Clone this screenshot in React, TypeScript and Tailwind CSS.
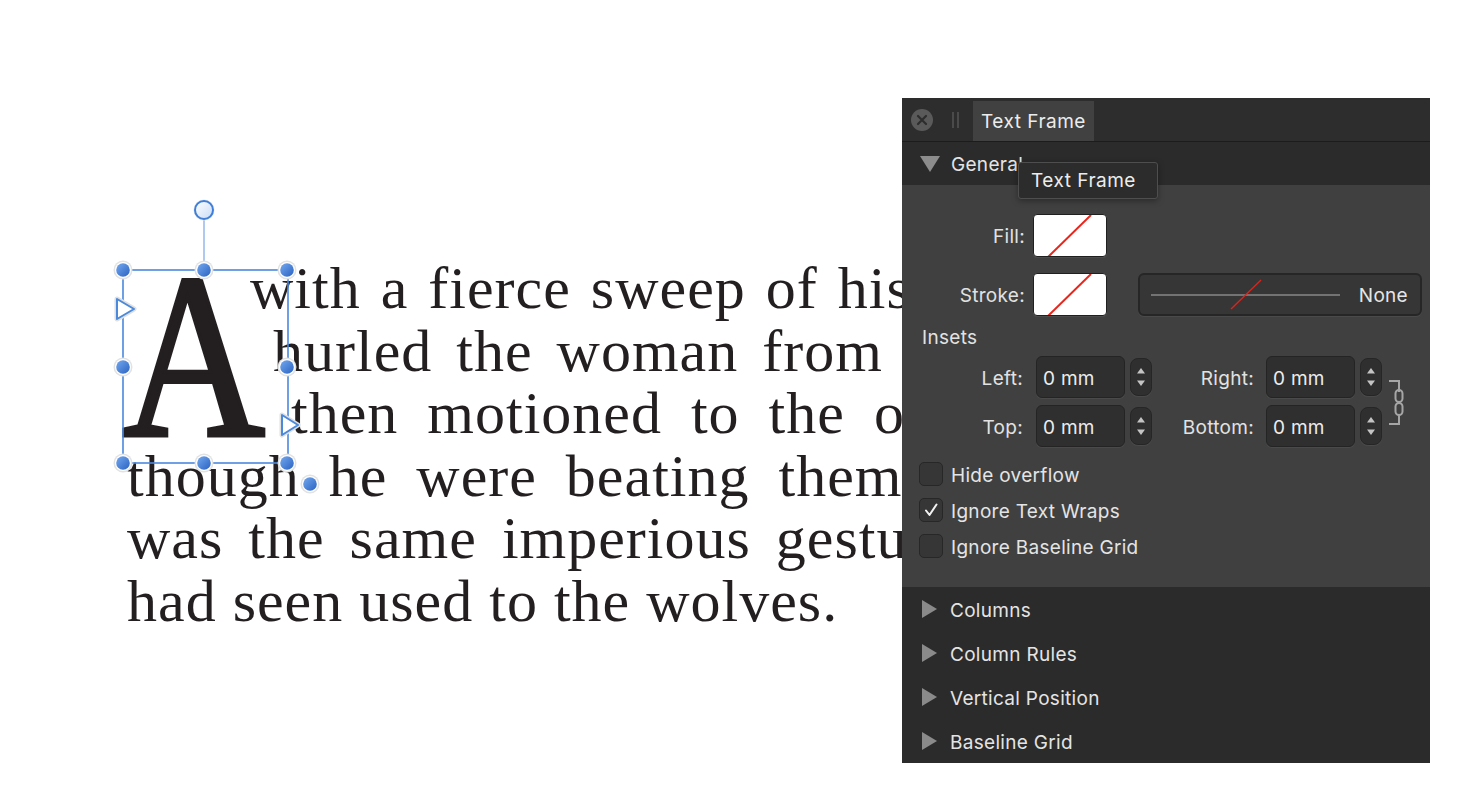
import * as React from "react";

const label = "pt-[4px] text-[19px] tracking-[0.3px] text-[#e2e2e2]";

function Stepper() {
  return (
    <div className="ml-[5px] flex h-[38px] w-[22px] flex-col items-center justify-center gap-[6px] rounded-[8px] border border-[#262626] bg-[#2f2f2f] shadow-[0_1px_0_#4a4a4a]">
      <svg width="10" height="7" viewBox="0 0 10 7" aria-hidden="true">
        <path d="M1 6.5 L5 1 L9 6.5 Z" fill="#c4c4c4" />
      </svg>
      <svg width="10" height="7" viewBox="0 0 10 7" aria-hidden="true">
        <path d="M1 0.5 L5 6 L9 0.5 Z" fill="#c4c4c4" />
      </svg>
    </div>
  );
}

function NumField({ value }: { value: string }) {
  return (
    <div className="flex h-[42px] w-[89px] items-center rounded-[6px] border border-[#242424] bg-[#2f2f2f] pl-[6px] pt-[4px] text-[19px] tracking-[0.3px] text-[#ececec] shadow-[0_1px_0_#4a4a4a]">
      {value}
    </div>
  );
}

function Swatch() {
  return (
    <div className="h-[43px] w-[74px] overflow-hidden rounded-[4px] border border-[#1f1f1f] bg-white shadow-[0_1px_0_#4c4c4c]">
      <svg width="74" height="43" viewBox="0 0 74 43" aria-hidden="true">
        <line x1="14" y1="42" x2="57" y2="0" stroke="#e8261c" strokeWidth="2" />
      </svg>
    </div>
  );
}

function Check({ text, checked }: { text: string; checked?: boolean }) {
  return (
    <div className="flex h-[24px] items-center pl-[17px]">
      <div className="flex h-[24px] w-[24px] items-center justify-center rounded-[5px] border border-[#272727] bg-[#363636]">
        {checked && (
          <svg width="16" height="16" viewBox="0 0 16 16" aria-hidden="true">
            <path d="M3 8.5 L6.5 13 L13.5 2.5" fill="none" stroke="#f2f2f2" strokeWidth="2" strokeLinecap="round" strokeLinejoin="round" />
          </svg>
        )}
      </div>
      <span className="ml-[8px] pt-[4px] text-[19px] tracking-[0.3px] text-[#e4e4e4]">{text}</span>
    </div>
  );
}

function Section({ title }: { title: string }) {
  return (
    <div className="flex h-[44px] items-center bg-[#2b2b2b]">
      <svg className="ml-[20px]" width="16" height="18" viewBox="0 0 16 18" aria-hidden="true">
        <path d="M0 0 L15 9 L0 18 Z" fill="#8a8a8a" />
      </svg>
      <span className="ml-[12px] pt-[4px] text-[19px] tracking-[0.3px] text-[#e4e4e4]">{title}</span>
    </div>
  );
}

function Handle({ x, y }: { x: number; y: number }) {
  return (
    <g>
      <circle cx={x} cy={y} r="9.5" fill="#e2e2e2" />
      <circle cx={x} cy={y} r="8" fill="#ffffff" />
      <circle cx={x} cy={y} r="6.8" fill="url(#hb)" />
    </g>
  );
}

function SelectionFrame() {
  return (
    <svg
      className="absolute left-0 top-0"
      width="1460"
      height="790"
      viewBox="0 0 1460 790"
      aria-hidden="true"
    >
      <defs>
        <linearGradient id="hb" x1="0" y1="0" x2="1" y2="1">
          <stop offset="0" stopColor="#74a9ee" />
          <stop offset="1" stopColor="#2a62c2" />
        </linearGradient>
        <linearGradient id="rb" x1="0" y1="0" x2="1" y2="1">
          <stop offset="0" stopColor="#ffffff" />
          <stop offset="1" stopColor="#c9dcf6" />
        </linearGradient>
      </defs>
      <line x1="204" y1="219" x2="204" y2="266" stroke="#94b7eb" strokeWidth="1.5" />
      <rect x="123" y="270" width="165" height="193" fill="none" stroke="#4a89dc" strokeWidth="1.6" />
      <circle cx="204" cy="210" r="10.5" fill="#e6e6e6" />
      <circle cx="204" cy="210" r="9" fill="url(#rb)" stroke="#3f7fd9" strokeWidth="2" />
      <path d="M117 299 L134 309 L117 319 Z" fill="#ffffff" stroke="#e0e0e0" strokeWidth="5" strokeLinejoin="round" />
      <path d="M117 299 L134 309 L117 319 Z" fill="#ffffff" stroke="#4a89dc" strokeWidth="2" strokeLinejoin="round" />
      <path d="M282 415 L298 425 L282 435 Z" fill="#ffffff" stroke="#e0e0e0" strokeWidth="5" strokeLinejoin="round" />
      <path d="M282 415 L298 425 L282 435 Z" fill="#ffffff" stroke="#4a89dc" strokeWidth="2" strokeLinejoin="round" />
      <Handle x={123} y={270} />
      <Handle x={204} y={270} />
      <Handle x={287} y={270} />
      <Handle x={123} y={367} />
      <Handle x={287} y={367} />
      <Handle x={123} y={463} />
      <Handle x={204} y={463} />
      <Handle x={287} y={463} />
      <Handle x={310} y={484} />
    </svg>
  );
}

const lines = [
  { text: "with a fierce sweep of his arm he", cls: "ml-[123px] [word-spacing:4px]" },
  { text: "hurled the woman from him, and", cls: "ml-[146px] [word-spacing:8px]" },
  { text: "then motioned to the others, as", cls: "ml-[164px] [word-spacing:13px]" },
  { text: "though he were beating them off. It", cls: "[word-spacing:13px]" },
  { text: "was the same imperious gesture that I", cls: "[word-spacing:9px]" },
  { text: "had seen used to the wolves.", cls: "" },
];

export default function App() {
  return (
    <div className="relative h-[790px] w-[1460px] overflow-hidden bg-white font-['Inter',sans-serif]">
      {/* document text, clipped where the panel sits over it */}
      <div className="w-[904px] overflow-hidden pl-[127px] pt-[257px] font-['Liberation_Serif',serif] text-[60px] leading-[62.6px] tracking-[1px] text-[#231f20]">
        {lines.map((l) => (
          <div key={l.text} className={`whitespace-nowrap ${l.cls}`}>
            {l.text}
          </div>
        ))}
      </div>

      {/* drop cap */}
      <span className="absolute left-[122px] top-[239px] origin-left scale-x-[0.84] font-['Liberation_Serif',serif] text-[236px] leading-[236px] text-[#231f20] [-webkit-text-stroke:4px_#231f20]">
        A
      </span>

      <SelectionFrame />

      {/* Text Frame panel */}
      <div className="absolute left-[902px] top-[98px] flex h-[665px] w-[528px] flex-col bg-[#2b2b2b]">
        <div className="flex h-[44px] items-center border-b border-[#1c1c1c] bg-[#2d2d2d]">
          <div className="ml-[9px] flex h-[22px] w-[22px] items-center justify-center rounded-full bg-[#5a5a5a]">
            <svg width="12" height="12" viewBox="0 0 12 12" aria-hidden="true">
              <path d="M2 2 L10 10 M10 2 L2 10" stroke="#2d2d2d" strokeWidth="2.2" strokeLinecap="round" />
            </svg>
          </div>
          <div className="ml-[19px] flex gap-[3px]">
            <span className="h-[16px] w-[2px] bg-[#4a4a4a]" />
            <span className="h-[16px] w-[2px] bg-[#4a4a4a]" />
          </div>
          <div className="ml-[14px] flex h-[40px] w-[121px] items-center self-end bg-[#414141] pl-[8px] pt-[2px] text-[19px] tracking-[0.5px] text-[#ececec]">
            Text Frame
          </div>
        </div>

        <div className="flex h-[43px] items-center bg-[#2b2b2b]">
          <svg className="ml-[18px]" width="20" height="16" viewBox="0 0 20 16" aria-hidden="true">
            <path d="M0 0 L20 0 L10 16 Z" fill="#8c8c8c" />
          </svg>
          <span className="ml-[11px] pt-[4px] text-[19px] tracking-[0.3px] text-[#e4e4e4]">General</span>
        </div>

        <div className="flex h-[402px] flex-col bg-[#404040] pt-[29px]">
          <div className="flex h-[43px] items-center">
            <span className={`w-[123px] text-right ${label}`}>Fill:</span>
            <div className="ml-[8px]">
              <Swatch />
            </div>
          </div>

          <div className="mt-[16px] flex h-[43px] items-center">
            <span className={`w-[123px] text-right ${label}`}>Stroke:</span>
            <div className="ml-[8px]">
              <Swatch />
            </div>
            <div className="ml-[31px] flex h-[43px] w-[284px] items-center rounded-[6px] border-2 border-[#262626] bg-[#363636] pr-[12px] shadow-[0_1px_0_#4a4a4a]">
              <svg className="ml-[11px]" width="192" height="34" viewBox="0 0 192 34" aria-hidden="true">
                <line x1="0" y1="17" x2="189" y2="17" stroke="#b0b0b0" strokeWidth="1" />
                <line x1="80" y1="31" x2="110" y2="2" stroke="#e0241c" strokeWidth="1.3" />
              </svg>
              <span className="ml-auto pt-[4px] text-[19px] tracking-[0.3px] text-[#e6e6e6]">None</span>
            </div>
          </div>

          <div className={`mt-[5px] flex h-[30px] items-center pl-[20px] ${label}`}>Insets</div>

          <div className="mt-[5px] flex items-center">
            <div className="flex flex-col gap-[7px]">
              <div className="flex h-[42px] items-center">
                <span className={`w-[121px] text-right ${label}`}>Left:</span>
                <div className="ml-[13px]">
                  <NumField value="0 mm" />
                </div>
                <Stepper />
                <span className={`w-[102px] text-right ${label}`}>Right:</span>
                <div className="ml-[12px]">
                  <NumField value="0 mm" />
                </div>
                <Stepper />
              </div>
              <div className="flex h-[42px] items-center">
                <span className={`w-[121px] text-right ${label}`}>Top:</span>
                <div className="ml-[13px]">
                  <NumField value="0 mm" />
                </div>
                <Stepper />
                <span className={`w-[102px] text-right ${label}`}>Bottom:</span>
                <div className="ml-[12px]">
                  <NumField value="0 mm" />
                </div>
                <Stepper />
              </div>
            </div>
            <svg className="ml-[7px] mt-[2px]" width="16" height="46" viewBox="0 0 16 46" aria-hidden="true">
              <path d="M0 1 L10 1 L10 12 M10 35 L10 44 L0 44" fill="none" stroke="#a6a6a6" strokeWidth="2" />
              <rect x="6.5" y="10" width="7" height="12" rx="3.5" fill="none" stroke="#a6a6a6" strokeWidth="2" />
              <rect x="6.5" y="23" width="7" height="12" rx="3.5" fill="none" stroke="#a6a6a6" strokeWidth="2" />
            </svg>
          </div>

          <div className="mt-[15px] flex flex-col gap-[12px]">
            <Check text="Hide overflow" />
            <Check text="Ignore Text Wraps" checked />
            <Check text="Ignore Baseline Grid" />
          </div>
        </div>

        <Section title="Columns" />
        <Section title="Column Rules" />
        <Section title="Vertical Position" />
        <Section title="Baseline Grid" />

        {/* tooltip */}
        <div className="absolute left-[116px] top-[64px] flex h-[37px] w-[140px] items-center rounded-[3px] border border-[#4e4e4e] bg-[#2c2c2c] pl-[12px] pt-[2px] text-[19px] tracking-[0.5px] text-[#ececec] shadow-[0_2px_6px_rgba(0,0,0,0.35)]">
          Text Frame
        </div>
      </div>
    </div>
  );
}
